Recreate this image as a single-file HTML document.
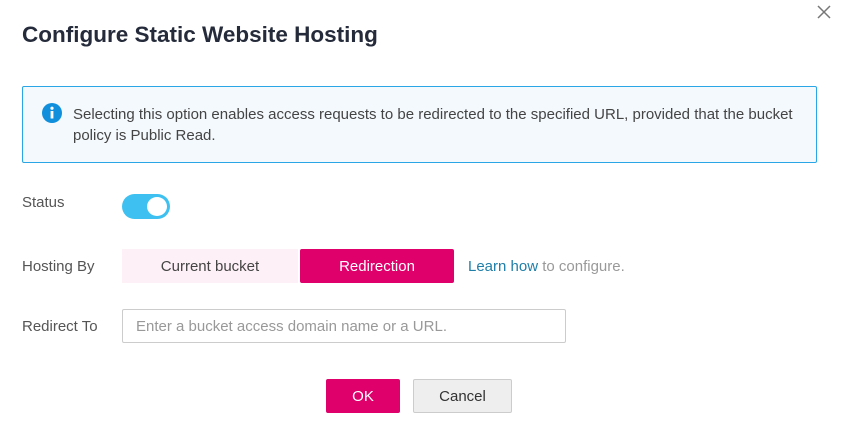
<!DOCTYPE html>
<html><head><meta charset="utf-8"><style>
*{margin:0;padding:0;box-sizing:border-box}
body{width:844px;height:425px;background:#fff;font-family:"Liberation Sans",Arial,sans-serif;position:relative;overflow:hidden;color:#333}
.a{position:absolute}
.lbl{font-size:15px;color:#555}
</style></head><body>
<div class="a" style="left:22px;top:22px;font-size:22.5px;font-weight:bold;color:#252b3a">Configure Static Website Hosting</div>
<svg class="a" style="left:817px;top:5px" width="14" height="14" viewBox="0 0 14 14"><path d="M1 1L13 13M13 1L1 13" stroke="#777" stroke-width="1.5"/></svg>
<div class="a" style="left:22px;top:86px;width:795px;height:77px;border:1px solid #2aa5e5;background:#f4f9fd;border-radius:2px"></div>
<svg class="a" style="left:42px;top:103px" width="20" height="20" viewBox="0 0 20 20"><circle cx="10" cy="10" r="10" fill="#0f8fdc"/><rect x="8.6" y="8" width="2.8" height="7.5" fill="#fff"/><circle cx="10" cy="5.2" r="1.6" fill="#fff"/></svg>
<div class="a" style="left:73px;top:104px;width:735px;font-size:15px;line-height:21px;color:#444">Selecting this option enables access requests to be redirected to the specified URL, provided that the bucket policy is Public Read.</div>
<div class="a lbl" style="left:22px;top:194px">Status</div>
<div class="a" style="left:122px;top:194px;width:48px;height:25px;border-radius:13px;background:#3ec1f0"></div>
<div class="a" style="left:147px;top:197px;width:20px;height:19px;border-radius:50%;background:#fff"></div>
<div class="a lbl" style="left:22px;top:258px">Hosting By</div>
<div class="a" style="left:122px;top:249px;width:176px;height:34px;background:#fdf0f6;font-size:15px;line-height:36px;text-align:center;color:#444">Current bucket</div>
<div class="a" style="left:300px;top:249px;width:154px;height:34px;background:#e0006c;border-radius:2px;font-size:15px;line-height:36px;text-align:center;color:#fff">Redirection</div>
<div class="a" style="left:468px;top:258px;font-size:15px;color:#999"><span style="color:#1f7ea8">Learn how</span> to configure.</div>
<div class="a lbl" style="left:22px;top:318px">Redirect To</div>
<div class="a" style="left:122px;top:309px;width:444px;height:34px;border:1px solid #ccc;border-radius:2px;font-size:15px;line-height:33px;padding-left:13px;color:#999">Enter a bucket access domain name or a URL.</div>
<div class="a" style="left:326px;top:379px;width:74px;height:34px;background:#e0006c;border-radius:2px;font-size:15px;line-height:36px;text-align:center;color:#fff">OK</div>
<div class="a" style="left:413px;top:379px;width:99px;height:34px;background:#eee;border:1px solid #ccc;border-radius:2px;font-size:15px;line-height:34px;text-align:center;color:#333">Cancel</div>
</body></html>
